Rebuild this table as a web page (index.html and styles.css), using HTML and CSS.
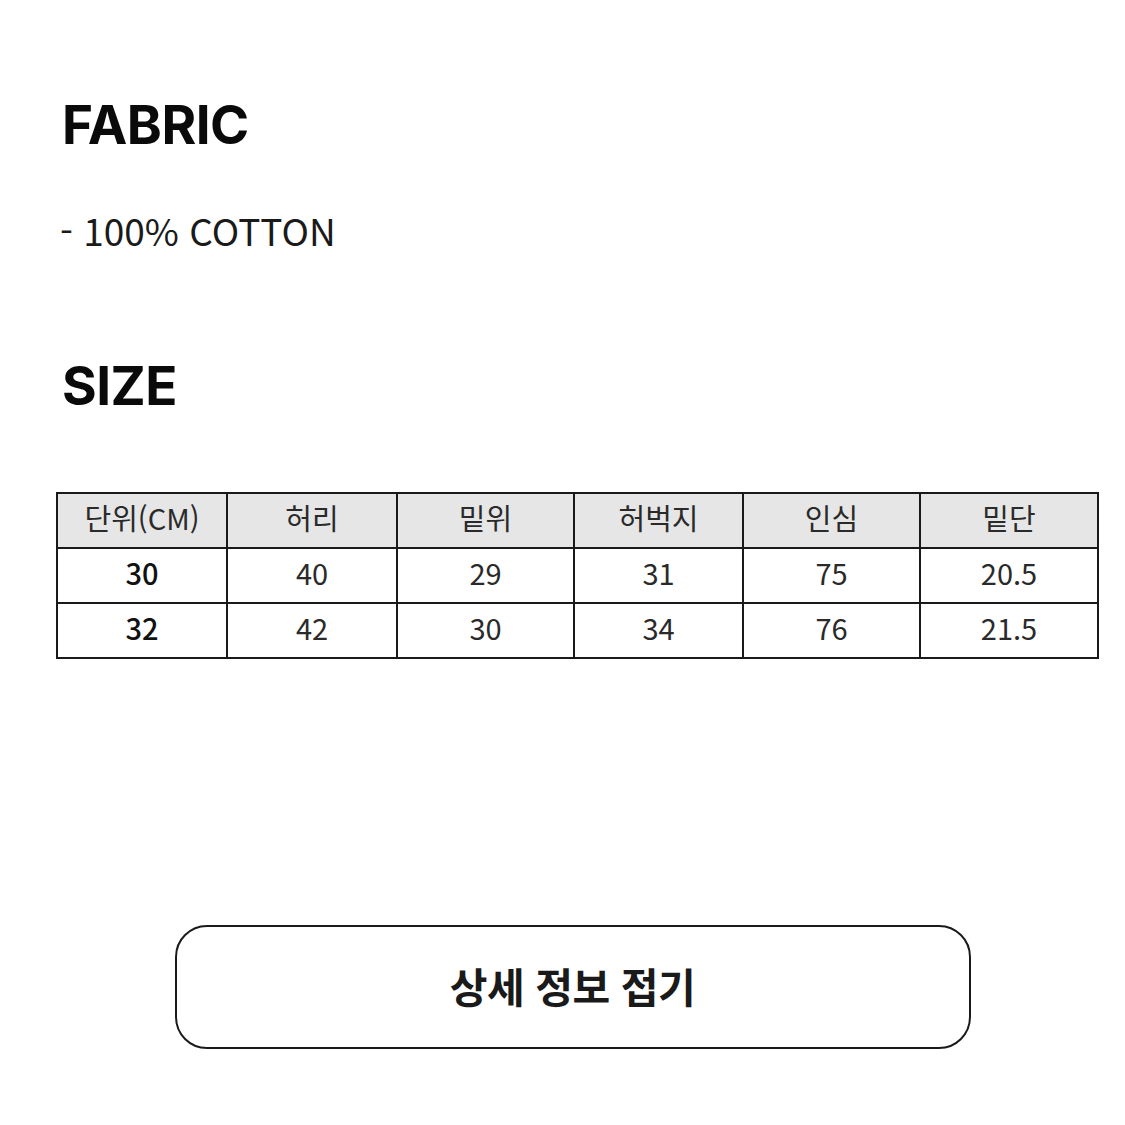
FILE: index.html
```html
<!DOCTYPE html>
<html lang="ko">
<head>
<meta charset="utf-8">
<link rel="stylesheet" href="styles.css">
</head>
<body>
<main class="page">
  <section class="block fabric">
    <h2 class="title">FABRIC</h2>
    <p class="desc">- 100% COTTON</p>
  </section>
  <section class="block size">
    <h2 class="title">SIZE</h2>
    <table class="size-table">
      <colgroup>
        <col style="width:170px"><col style="width:170px"><col style="width:177px"><col style="width:169px"><col style="width:177px"><col style="width:178px">
      </colgroup>
      <thead>
        <tr><th>단위(CM)</th><th>허리</th><th>밑위</th><th>허벅지</th><th>인심</th><th>밑단</th></tr>
      </thead>
      <tbody>
        <tr><td class="key">30</td><td>40</td><td>29</td><td>31</td><td>75</td><td>20.5</td></tr>
        <tr><td class="key">32</td><td>42</td><td>30</td><td>34</td><td>76</td><td>21.5</td></tr>
      </tbody>
    </table>
  </section>
  <div class="actions">
    <button class="fold-btn">상세 정보 접기</button>
  </div>
</main>
</body>
</html>
```

FILE: styles.css
```css
html, body {
  margin: 0;
  padding: 0;
  background: #fff;
}
body {
  font-family: "Inter", "Noto Sans CJK KR", sans-serif;
  color: #111;
}
.page {
  width: 1125px;
  height: 1125px;
  box-sizing: border-box;
  padding: 90px 0 0 0;
}
.block {
  padding-left: 62px;
}
.title {
  margin: 0;
  font-size: 53px;
  font-weight: 700;
  line-height: 70px;
  letter-spacing: -0.5px;
  color: #0a0a0a;
}
.desc {
  margin: 45px 0 0 -2px;
  font-family: "Noto Sans CJK KR", sans-serif;
  font-size: 37px;
  font-weight: 400;
  line-height: 50px;
  color: #1a1a1a;
}
.size {
  margin-top: 96px;
  padding-left: 0;
}
.size .title {
  padding-left: 62px;
}
.size-table {
  margin: 71px 0 0 56px;
  border-collapse: collapse;
  table-layout: fixed;
  width: 1041px;
  font-family: "Noto Sans CJK KR", sans-serif;
  font-size: 29px;
  color: #2a2a2a;
}
.size-table th,
.size-table td {
  border: 2px solid #1a1a1a;
  height: 47px;
  padding: 0 0 6px 0;
  text-align: center;
  font-weight: 400;
  line-height: 47px;
}
.size-table th {
  background: #e6e6e6;
}
.size-table td.key {
  font-weight: 500;
  color: #111;
}
.actions {
  display: flex;
  justify-content: center;
  margin-top: 266px;
  padding-left: 20px;
}
.fold-btn {
  width: 796px;
  height: 124px;
  padding: 0 0 5px 0;
  border: 2.5px solid #1a1a1a;
  border-radius: 32px;
  background: #fff;
  font-family: "Noto Sans CJK KR", sans-serif;
  font-size: 41px;
  font-weight: 700;
  color: #1a1a1a;
  letter-spacing: -0.5px;
  cursor: pointer;
}
```
